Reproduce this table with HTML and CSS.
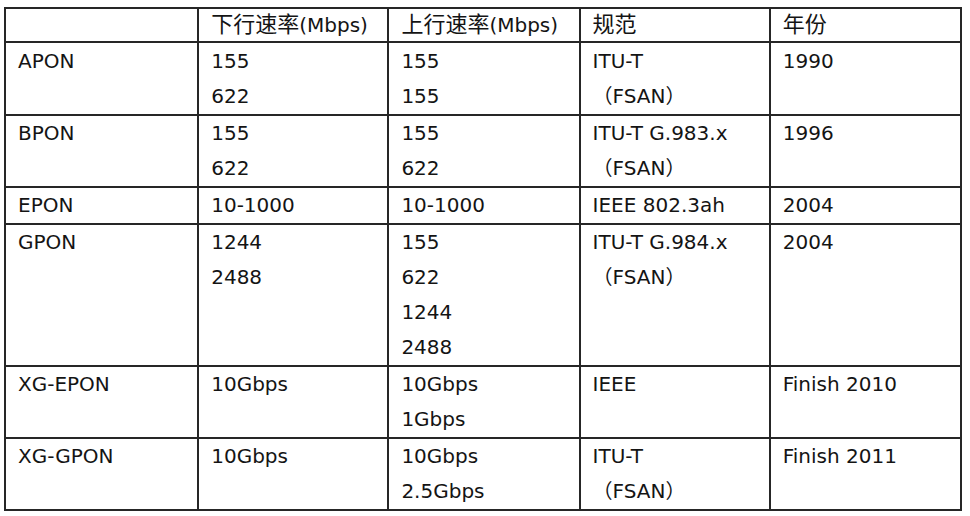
FILE: index.html
```html
<!DOCTYPE html>
<html>
<head>
<meta charset="utf-8">
<link rel="stylesheet" href="styles.css">
</head>
<body>
<table class="pon">
  <colgroup>
    <col class="c1"><col class="c2"><col class="c3"><col class="c4"><col class="c5">
  </colgroup>
  <thead>
    <tr>
      <th></th>
      <th><span class="zh">下行速率</span>(Mbps)</th>
      <th><span class="zh">上行速率</span>(Mbps)</th>
      <th><span class="zh">规范</span></th>
      <th><span class="zh">年份</span></th>
    </tr>
  </thead>
  <tbody>
    <tr>
      <td>APON</td>
      <td>155<br>622</td>
      <td>155<br>155</td>
      <td>ITU-T<br><span class="fw">（</span>FSAN<span class="fw">）</span></td>
      <td>1990</td>
    </tr>
    <tr>
      <td>BPON</td>
      <td>155<br>622</td>
      <td>155<br>622</td>
      <td>ITU-T G.983.x<br><span class="fw">（</span>FSAN<span class="fw">）</span></td>
      <td>1996</td>
    </tr>
    <tr>
      <td>EPON</td>
      <td>10-1000</td>
      <td>10-1000</td>
      <td>IEEE 802.3ah</td>
      <td>2004</td>
    </tr>
    <tr>
      <td>GPON</td>
      <td>1244<br>2488</td>
      <td>155<br>622<br>1244<br>2488</td>
      <td>ITU-T G.984.x<br><span class="fw">（</span>FSAN<span class="fw">）</span></td>
      <td>2004</td>
    </tr>
    <tr>
      <td>XG-EPON</td>
      <td>10Gbps</td>
      <td>10Gbps<br>1Gbps</td>
      <td>IEEE</td>
      <td>Finish 2010</td>
    </tr>
    <tr>
      <td>XG-GPON</td>
      <td>10Gbps</td>
      <td>10Gbps<br>2.5Gbps</td>
      <td>ITU-T<br><span class="fw">（</span>FSAN<span class="fw">）</span></td>
      <td>Finish 2011</td>
    </tr>
  </tbody>
</table>
</body>
</html>
```

FILE: styles.css
```css
html, body {
  margin: 0;
  padding: 0;
  background: #ffffff;
}

body {
  padding: 7px 0 0 4px;
  font-family: "DejaVu Sans", "Noto Sans CJK SC", sans-serif;
  font-size: 20px;
  color: #141414;
}

.pon {
  border-collapse: collapse;
  width: 958px;
  table-layout: fixed;
}

.c1 { width: 193px; }
.c2 { width: 190px; }
.c3 { width: 191px; }
.c4 { width: 190px; }
.c5 { width: 191px; }

.pon th,
.pon td {
  border: 2px solid #262626;
  padding: 0 0 0 12px;
  text-align: left;
  vertical-align: top;
  white-space: nowrap;
  font-weight: normal;
}

.pon th {
  line-height: 32px;
  height: 32px;
}

.pon td {
  line-height: 35px;
}

.pon tbody tr:first-child td {
  padding-top: 1px;
}

.zh {
  font-family: "Noto Sans CJK SC", sans-serif;
  font-size: 22px;
  line-height: 1;
}

.fw {
  font-family: "Noto Sans CJK SC", sans-serif;
  line-height: 1;
}
```
